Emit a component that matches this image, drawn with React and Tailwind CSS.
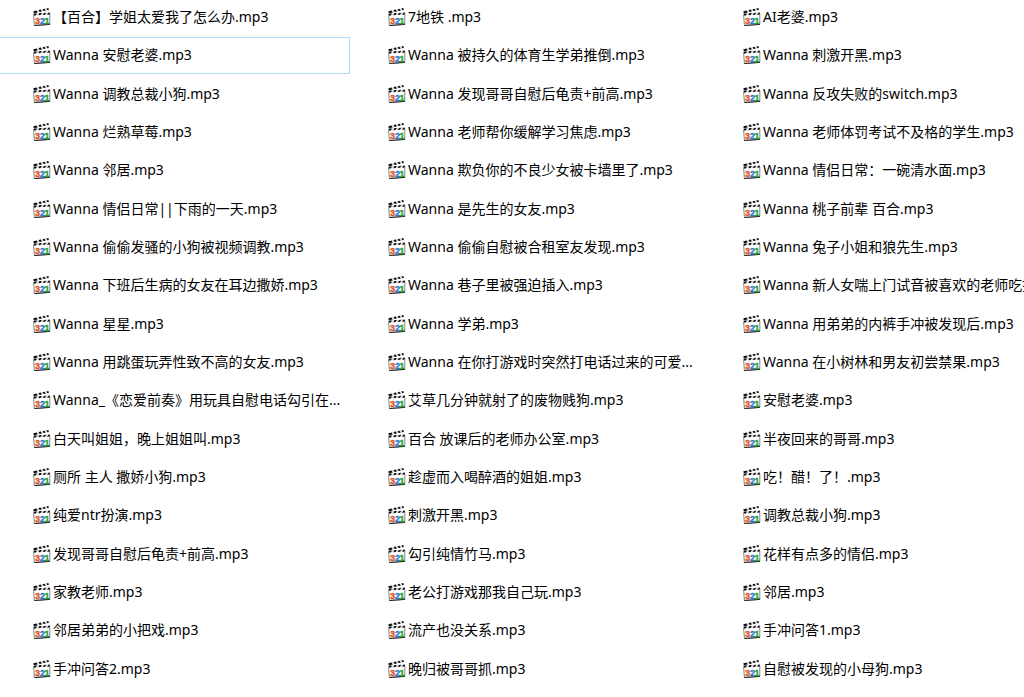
import React, { useState } from 'react';
import clsx from 'clsx';

// Listed left to right, three per row
const FILES = [
  '【百合】学姐太爱我了怎么办.mp3', '7地铁 .mp3', 'AI老婆.mp3',
  'Wanna 安慰老婆.mp3', 'Wanna 被持久的体育生学弟推倒.mp3', 'Wanna 刺激开黑.mp3',
  'Wanna 调教总裁小狗.mp3', 'Wanna 发现哥哥自慰后龟责+前高.mp3', 'Wanna 反攻失败的switch.mp3',
  'Wanna 烂熟草莓.mp3', 'Wanna 老师帮你缓解学习焦虑.mp3', 'Wanna 老师体罚考试不及格的学生.mp3',
  'Wanna 邻居.mp3', 'Wanna 欺负你的不良少女被卡墙里了.mp3', 'Wanna 情侣日常：一碗清水面.mp3',
  'Wanna 情侣日常||下雨的一天.mp3', 'Wanna 是先生的女友.mp3', 'Wanna 桃子前辈 百合.mp3',
  'Wanna 偷偷发骚的小狗被视频调教.mp3', 'Wanna 偷偷自慰被合租室友发现.mp3', 'Wanna 兔子小姐和狼先生.mp3',
  'Wanna 下班后生病的女友在耳边撒娇.mp3', 'Wanna 巷子里被强迫插入.mp3', 'Wanna 新人女喘上门试音被喜欢的老师吃掉.mp3',
  'Wanna 星星.mp3', 'Wanna 学弟.mp3', 'Wanna 用弟弟的内裤手冲被发现后.mp3',
  'Wanna 用跳蛋玩弄性致不高的女友.mp3', 'Wanna 在你打游戏时突然打电话过来的可爱...', 'Wanna 在小树林和男友初尝禁果.mp3',
  'Wanna_《恋爱前奏》用玩具自慰电话勾引在...', '艾草几分钟就射了的废物贱狗.mp3', '安慰老婆.mp3',
  '白天叫姐姐，晚上姐姐叫.mp3', '百合 放课后的老师办公室.mp3', '半夜回来的哥哥.mp3',
  '厕所 主人 撒娇小狗.mp3', '趁虚而入喝醉酒的姐姐.mp3', '吃！醋！了！.mp3',
  '纯爱ntr扮演.mp3', '刺激开黑.mp3', '调教总裁小狗.mp3',
  '发现哥哥自慰后龟责+前高.mp3', '勾引纯情竹马.mp3', '花样有点多的情侣.mp3',
  '家教老师.mp3', '老公打游戏那我自己玩.mp3', '邻居.mp3',
  '邻居弟弟的小把戏.mp3', '流产也没关系.mp3', '手冲问答1.mp3',
  '手冲问答2.mp3', '晚归被哥哥抓.mp3', '自慰被发现的小母狗.mp3',
];

// Clapperboard with the 3-2-1 countdown
const MediaIcon = () => (
  <svg viewBox="0 0 18 18" className="w-[18px] h-[18px] shrink-0" aria-hidden="true">
    <path d="M0.6 6.6 L16.8 5.4 V16.4 L1.4 17.5 Z" fill="#fff" stroke="#666" strokeWidth="0.8" />
    <path d="M1.4 17.5 L17 16.4" stroke="#222" strokeWidth="1" />
    <path d="M0.4 3.2 L15.4 0 L15.8 2 L0.8 5.2 Z" fill="#ddd" />
    <path d="M0.4 3.2 l3.2 -.7 l1 1.9 l-3.8 .8z M5.6 2.1 l2.2 -.5 l1 1.9 l-2.2 .5z M9.6 1.2 l2 -.4 l1 1.9 l-2 .4z M13.4 .4 l2 -.4 l.4 2 l-1.4 .3z" fill="#111" />
    <path d="M0.8 5.4 L16.8 4.6 V6.6 L1 7.6 Z" fill="#ddd" />
    <path d="M0.8 5.4 h3.2 l-1.2 2.1 l-1.8 .1z M6.4 5.1 l2.4 -.1 l-1.2 2.1 l-2.2 .1z M11 4.9 l2.2 -.1 l-1.2 2 l-2.2 .1z M15.2 4.7 l1.6 -.1 v2 l-2.6 .1z" fill="#111" />
    <g fontFamily="Liberation Sans, sans-serif" fontWeight="700" fontSize="9" strokeWidth="0.4">
      <text x="2" y="16" fill="#e2571c" stroke="#e2571c">3</text>
      <text x="7" y="16" fill="#2f7bd0" stroke="#2f7bd0">2</text>
      <text x="11.6" y="15.6" fill="#2fa02f" stroke="#2fa02f">1</text>
    </g>
  </svg>
);

const FileItem = ({ name, focused, onSelect }) => (
  <li className="flex min-w-0 py-px pr-[5px]">
    <button
      type="button"
      onClick={onSelect}
      className={clsx(
        'flex flex-1 min-w-0 items-center gap-[2px] border border-l-0 pl-[33px] text-left outline-none',
        focused ? 'border-[#b0dcfb]' : 'border-transparent'
      )}
    >
      <MediaIcon />
      <span className="whitespace-nowrap">{name}</span>
    </button>
  </li>
);

const App = () => {
  const [focused, setFocused] = useState(3);

  return (
    <main className="min-h-screen overflow-hidden bg-white text-sm text-black font-['Noto_Sans','Noto_Sans_CJK_SC',sans-serif]">
      <ul className="-mt-0.5 grid min-h-screen w-[104%] grid-cols-3 auto-rows-fr pb-[7px]">
        {FILES.map((name, i) => (
          <FileItem key={i} name={name} focused={i === focused} onSelect={() => setFocused(i)} />
        ))}
      </ul>
    </main>
  );
};

export default App;
